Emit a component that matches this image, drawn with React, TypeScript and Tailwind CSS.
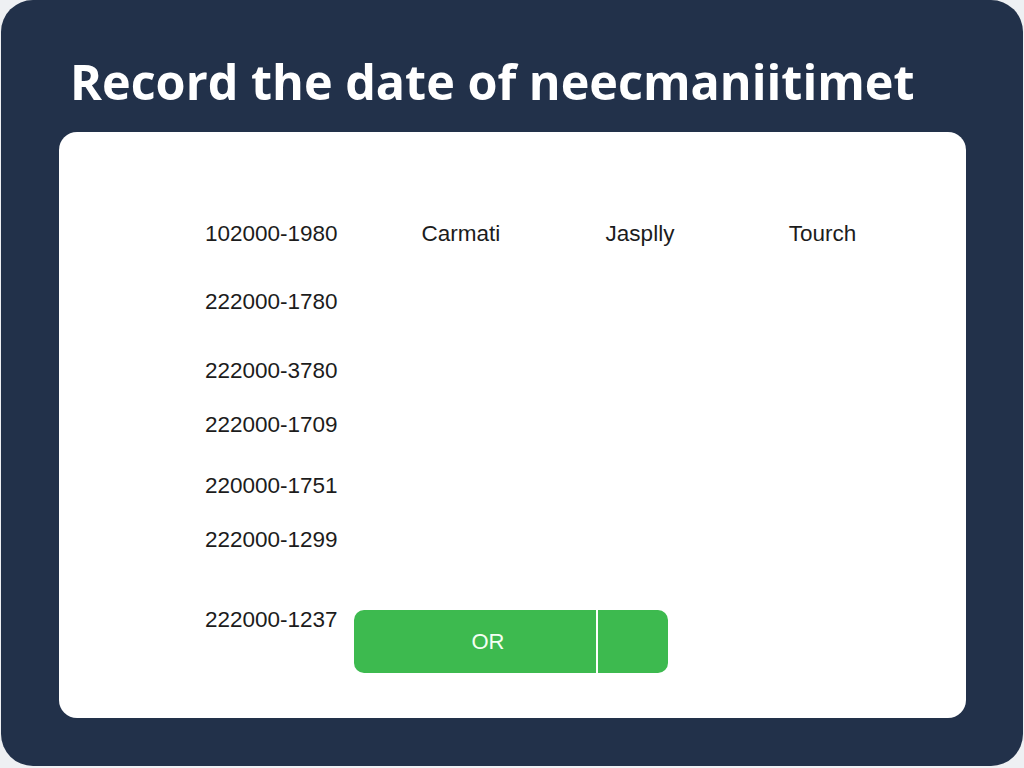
import React from "react";

const rows = ["222000-1780", "222000-3780", "222000-1709", "220000-1751", "222000-1299"];
const gaps = ["mt-[42px]", "mt-[43px]", "mt-[28px]", "mt-[35px]", "mt-[28px]"];

export default function App() {
  return (
    <div className="w-[1024px] h-[768px] bg-[#eef0f3] overflow-hidden">
      <div className="ml-[1px] w-[1022px] h-[766px] rounded-[32px] bg-[#22314a] flex flex-col">
        <h1
          className="mt-[50px] ml-[69px] text-white font-bold text-[48.5px] leading-[62px]"
          style={{ fontFamily: '"Open Sans", sans-serif' }}
        >
          Record the date of neecmaniitimet
        </h1>
        <div
          className="mt-[20px] ml-[58px] w-[907px] h-[586px] rounded-[18px] bg-white pt-[89px] pl-[146px] text-[#1c1c1c] text-[22.5px] leading-[26px]"
          style={{ fontFamily: '"Liberation Sans", Arial, sans-serif' }}
        >
          <div className="flex">
            <div className="w-[166px]">102000-1980</div>
            <div className="w-[180px] text-center">Carmati</div>
            <div className="w-[178px] text-center">Jasplly</div>
            <div className="w-[187px] text-center">Tourch</div>
          </div>
          {rows.map((r, i) => (
            <div key={r} className={gaps[i]}>
              {r}
            </div>
          ))}
          <div className="mt-[54px] flex items-start">
            <div className="w-[149px]">222000-1237</div>
            <div className="mt-[3px] flex h-[63px] w-[314px] rounded-[10px] bg-[#3dba4f] overflow-hidden">
              <div className="w-[242px] flex items-center justify-center pl-[26px] text-[#f3fff3] text-[22px]">
                OR
              </div>
              <div className="w-[2px] bg-white" />
              <div className="flex-1" />
            </div>
          </div>
        </div>
      </div>
    </div>
  );
}
